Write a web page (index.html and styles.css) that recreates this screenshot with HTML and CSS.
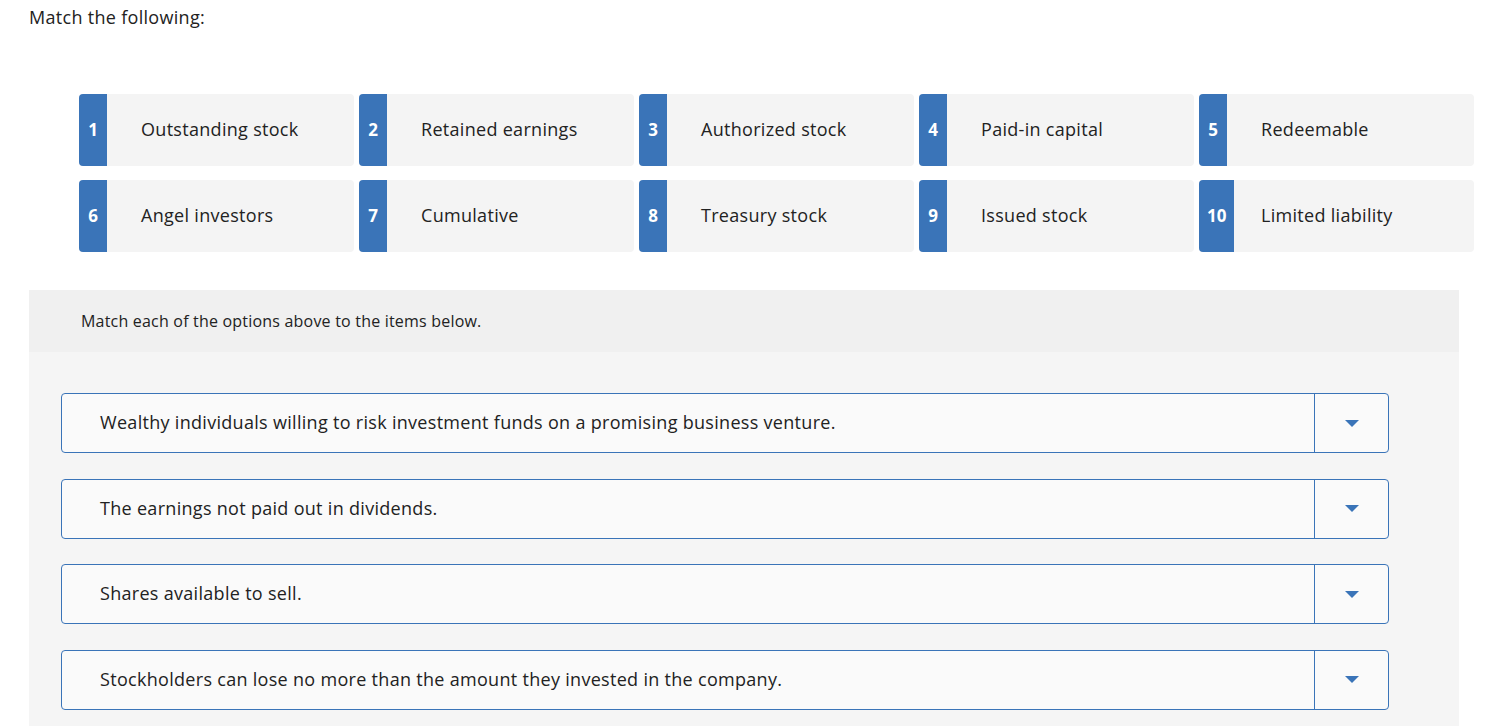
FILE: index.html
```html
<!DOCTYPE html>
<html lang="en">
<head>
    <meta name="viewport" content="width=device-width, initial-scale=1">
    <meta charset="utf-8">
    <link rel="stylesheet" href="styles.css">
</head>
<body>

<p class="prompt">Match the following:</p>

<!-- option cards -->
<div class="choices">
  <div class="choice"><div class="num-cell"><span class="num">1</span></div><span class="label">Outstanding stock</span></div>
  <div class="choice"><div class="num-cell"><span class="num">2</span></div><span class="label">Retained earnings</span></div>
  <div class="choice"><div class="num-cell"><span class="num">3</span></div><span class="label">Authorized stock</span></div>
  <div class="choice"><div class="num-cell"><span class="num">4</span></div><span class="label">Paid-in capital</span></div>
  <div class="choice"><div class="num-cell"><span class="num">5</span></div><span class="label">Redeemable</span></div>
  <div class="choice"><div class="num-cell"><span class="num">6</span></div><span class="label">Angel investors</span></div>
  <div class="choice"><div class="num-cell"><span class="num">7</span></div><span class="label">Cumulative</span></div>
  <div class="choice"><div class="num-cell"><span class="num">8</span></div><span class="label">Treasury stock</span></div>
  <div class="choice"><div class="num-cell"><span class="num">9</span></div><span class="label">Issued stock</span></div>
  <div class="choice"><div class="num-cell"><span class="num">10</span></div><span class="label">Limited liability</span></div>
</div>

<!-- matching panel -->
<div class="panel">
  <div class="panel-head">Match each of the options above to the items below.</div>
  <div class="panel-body">
    <div class="match-row">
      <div class="match-text">Wealthy individuals willing to risk investment funds on a promising business venture.</div>
      <div class="match-drop"><span class="caret"></span></div>
    </div>
    <div class="match-row">
      <div class="match-text">The earnings not paid out in dividends.</div>
      <div class="match-drop"><span class="caret"></span></div>
    </div>
    <div class="match-row">
      <div class="match-text">Shares available to sell.</div>
      <div class="match-drop"><span class="caret"></span></div>
    </div>
    <div class="match-row">
      <div class="match-text">Stockholders can lose no more than the amount they invested in the company.</div>
      <div class="match-drop"><span class="caret"></span></div>
    </div>
  </div>
</div>

</body>
</html>
```

FILE: styles.css
```css
* {
  box-sizing: border-box;
}
body {
  margin: 0;
  padding: 0 0 0 29px;
  font-family: "Open Sans", Lato, sans-serif;
  letter-spacing: 0.3px;
  color: #222;
  background: #fff;
  overflow: hidden;
}

.prompt {
  margin: 0;
  padding-top: 5px;
  font-size: 18px;
  line-height: 24px;
}



.choices {
  display: grid;
  grid-template-columns: repeat(5, 275px);
  gap: 14px 5px;
  margin: 65px 0 0 50px;
}
.choice {
  display: flex;
  height: 72px;
  background-color: #f4f4f4;
  border-radius: 4px;
  overflow: hidden;
}
.num-cell {
  display: flex;
  width: 62px;
  flex-shrink: 0;
}
.num {
  display: flex;
  align-items: center;
  padding: 0 8px 2px;
  min-width: 28px;
  justify-content: center;
  background-color: #3a74b8;
  color: white;
  font-weight: bold;
  font-size: 17px;
  letter-spacing: 0;
}
.label {
  display: flex;
  align-items: center;
  padding-bottom: 3px;
  font-size: 18px;
}



.panel {
  width: 1430px;
  margin-top: 38px;
  background-color: #f5f5f5;
}
.panel-head {
  height: 62px;
  padding-left: 52px;
  display: flex;
  align-items: center;
  background-color: #f0f0f0;
  font-size: 16px;
  letter-spacing: 0.2px;
}
.panel-body {
  display: flex;
  flex-direction: column;
  gap: 25.5px;
  padding: 41px 70px 20px 32px;
}
.match-row {
  display: flex;
  height: 60px;
  border: 1px solid #3a74b8;
  border-radius: 4px;
  background-color: #fafafa;
}
.match-text {
  flex: 1;
  display: flex;
  align-items: center;
  padding-left: 38px;
  padding-bottom: 2px;
  font-size: 18px;
}
.match-drop {
  width: 74px;
  display: flex;
  align-items: center;
  justify-content: center;
  border-left: 1px solid #3a74b8;
}
.caret {
  width: 0;
  height: 0;
  border-left: 7px solid transparent;
  border-right: 7px solid transparent;
  border-top: 7px solid #3a74b8;
}
```
